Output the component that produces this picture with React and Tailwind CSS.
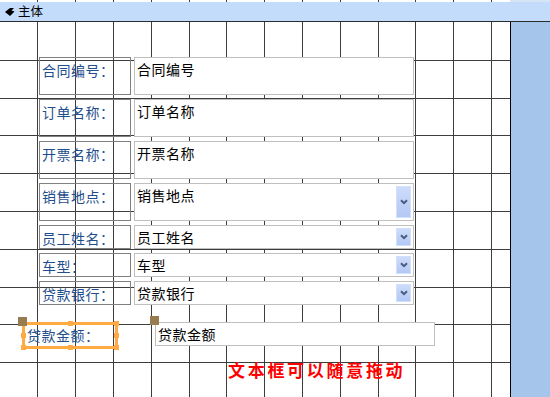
const ROWS = [
  { label: "合同编号：", value: "合同编号", tall: true },
  { label: "订单名称：", value: "订单名称", tall: true },
  { label: "开票名称：", value: "开票名称", tall: true },
  { label: "销售地点：", value: "销售地点", tall: true, combo: true },
  { label: "员工姓名：", value: "员工姓名", combo: true },
  { label: "车型：", value: "车型", combo: true },
  { label: "贷款银行：", value: "贷款银行", combo: true },
];

const V_LINES = Array.from({ length: 13 }, (_, i) => Math.floor(37.8 * (i + 1)));
const H_LINES = Array.from({ length: 9 }, (_, i) => Math.round(37.8 * (i + 1)));

function Grid({ height }) {
  return (
    <svg className="absolute left-0 top-0" width="510" height={height} shapeRendering="crispEdges" aria-hidden="true">
      {V_LINES.map((x) => (
        <line key={"v" + x} x1={x + 0.5} y1="0" x2={x + 0.5} y2={height} stroke="#3d3d3d" strokeWidth="1" />
      ))}
      {H_LINES.map((y) => (
        <line key={"h" + y} x1="0" y1={y + 0.5} x2="510" y2={y + 0.5} stroke="#3d3d3d" strokeWidth="1" />
      ))}
    </svg>
  );
}

function SectionIcon() {
  return (
    <svg width="10" height="10" viewBox="0 0 10 10" aria-hidden="true">
      <path d="M0 5 L5 1 L9 1 L6.5 3.5 L9.5 4.5 L5 9 Z" fill="#000" />
    </svg>
  );
}

function ComboButton() {
  return (
    <div className="absolute right-[2px] top-[2px] bottom-[2px] flex w-[15px] items-center justify-center border border-[#d3e0fb] bg-gradient-to-b from-[#cddcfb] to-[#b3c8f4]">
      <svg width="8" height="6" viewBox="0 0 8 6" aria-hidden="true">
        <path d="M1 1.2 L4 4.2 L7 1.2" fill="none" stroke="#4b5b82" strokeWidth="2" />
      </svg>
    </div>
  );
}

function Handle({ className }) {
  return <span className={`absolute h-[5px] w-[5px] bg-[#ffaa44] ${className}`} />;
}

function MoveHandle({ className }) {
  return <span className={`absolute h-[9px] w-[9px] bg-[#987b4e] ${className}`} />;
}

function FieldRow({ row }) {
  const height = row.tall ? "h-[38px]" : "h-[24px]";
  return (
    <div className="flex gap-[3px]">
      <div className={`w-[92px] ${height} border border-[#808080] pl-[2px] pt-[3px] text-[14px] leading-[18px] tracking-[0.5px] text-[#1f4e8d]`}>
        {row.label}
      </div>
      <div className={`relative w-[280px] ${height} border border-[#c0c0c0] bg-white pl-[2px] pt-[2px] text-[14px] leading-[18px] tracking-[0.5px] text-black`}>
        {row.value}
        {row.combo && <ComboButton />}
      </div>
    </div>
  );
}

export default function App() {
  return (
    <div className="h-[397px] w-[550px] overflow-hidden bg-white font-['Noto_Sans_CJK_SC',sans-serif]">
      <div className="relative h-[2px] bg-white">
        <Grid height={2} />
        <div className="absolute right-0 top-0 h-[2px] w-[40px] bg-[#d6e4f5]" />
      </div>
      <div className="flex h-[20px] items-center gap-[3px] border-b border-[#2b2b2b] bg-[#c4dcfc] pl-[5px] text-[12.5px] leading-none text-black">
        <SectionIcon />
        <span>主体</span>
      </div>

      <div className="flex h-[375px]">
        <div className="relative h-full w-[510px] bg-white">
          <Grid height={375} />

          <div className="relative flex flex-col gap-[4px] pl-[39px] pt-[35px]">
            {ROWS.map((row) => (
              <FieldRow key={row.value} row={row} />
            ))}
          </div>

          <div className="relative mt-[17px] flex items-start pl-[22px]">
            <div className="relative h-[27px] w-[96px] border-[3px] border-[#ffaa44] pl-[2px] text-[14px] leading-[20px] tracking-[0.5px] text-[#1f4e8d]">
              贷款金额：
              <MoveHandle className="left-[-7px] top-[-8px]" />
              <Handle className="left-[43px] top-[-4px]" />
              <Handle className="right-[-4px] top-[-4px]" />
              <Handle className="right-[-4px] top-[8px]" />
              <Handle className="right-[-4px] bottom-[-4px]" />
              <Handle className="left-[43px] bottom-[-4px]" />
              <Handle className="left-[-4px] bottom-[-4px]" />
              <Handle className="left-[-4px] top-[8px]" />
            </div>
            <div className="relative ml-[37px] h-[24px] w-[280px] border border-[#c0c0c0] bg-white pl-[2px] pt-[1px] text-[14px] leading-[20px] tracking-[0.5px] text-black">
              贷款金额
              <MoveHandle className="left-[-6px] top-[-7px]" />
            </div>
          </div>

          <div className="relative ml-[228px] mt-[10px] text-[17px] font-bold leading-[22px] tracking-[2.7px] text-[#ff0000]">
            文本框可以随意拖动
          </div>
        </div>
        <div className="h-full w-[40px] border-l border-black bg-[#a6c5ea]" />
      </div>
    </div>
  );
}
